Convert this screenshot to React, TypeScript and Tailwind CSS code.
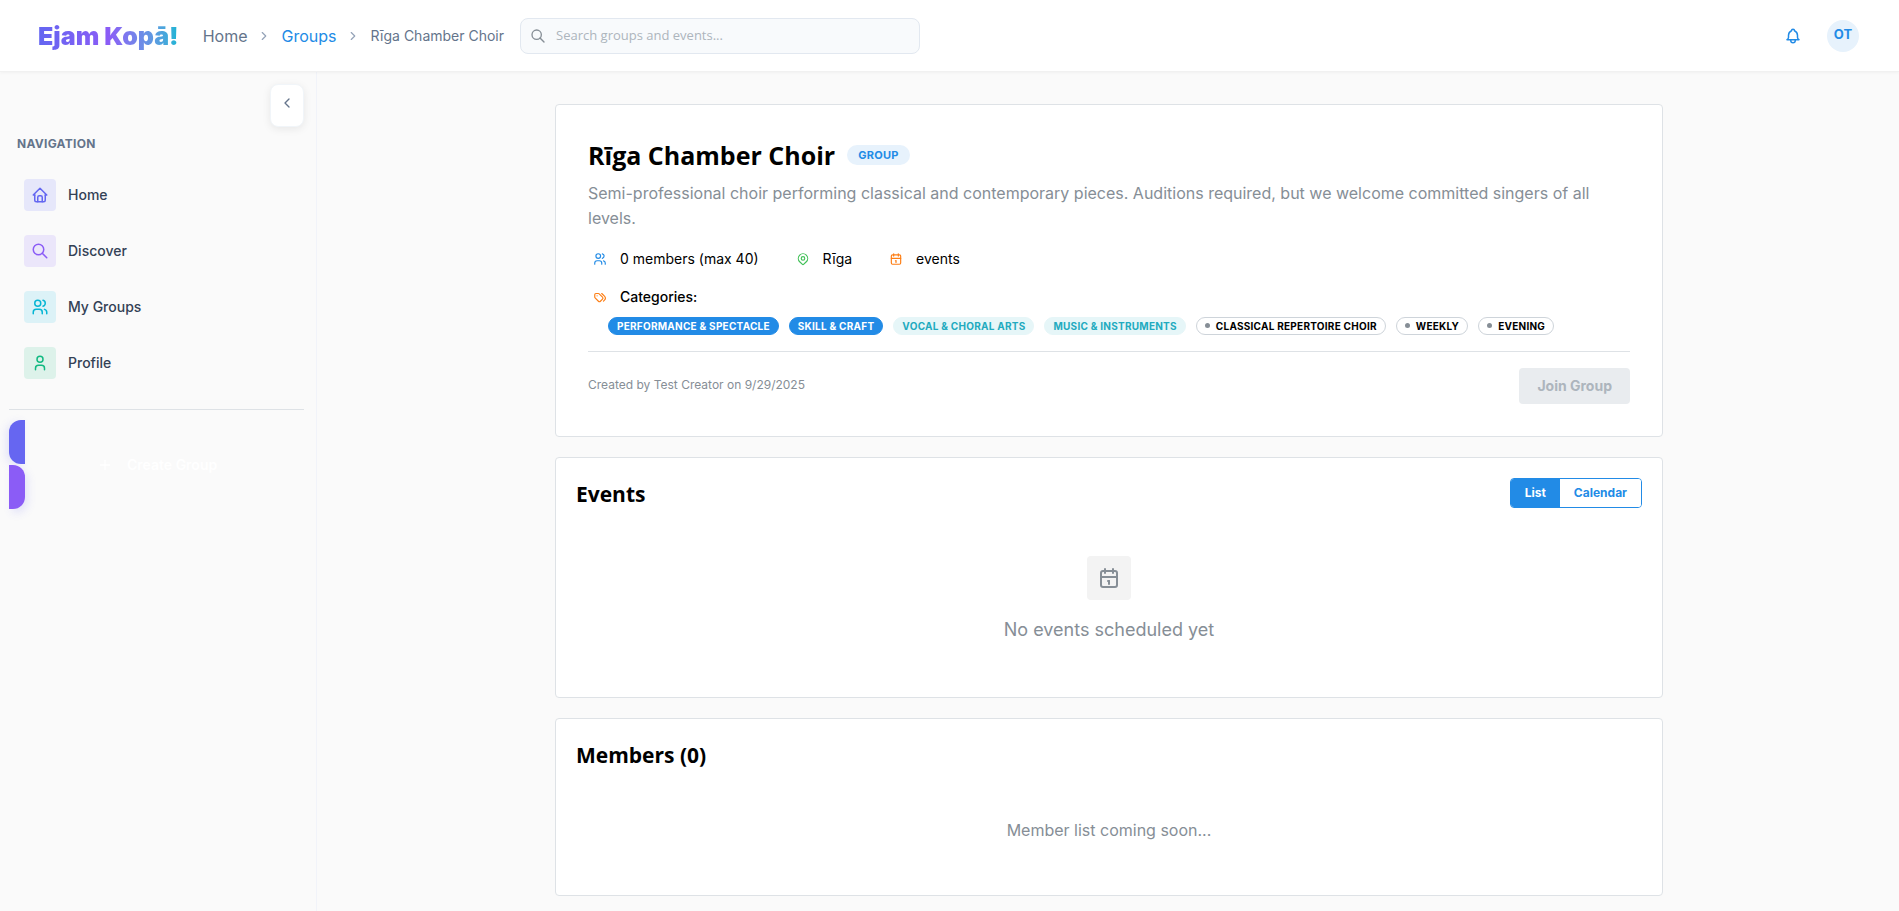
import React from "react";
import type { ReactNode } from "react";
import {
  TbBell,
  TbCalendar,
  TbChevronLeft,
  TbChevronRight,
  TbHome,
  TbMapPin,
  TbPlus,
  TbSearch,
  TbTags,
  TbUser,
  TbUsers,
} from "react-icons/tb";

const navItems = [
  { label: "Home", icon: <TbHome size={18} />, tone: "bg-[#e6e7fa] text-[#6366f1]" },
  { label: "Discover", icon: <TbSearch size={18} />, tone: "bg-[#ebe6fa] text-[#8b5cf6]" },
  { label: "My Groups", icon: <TbUsers size={18} />, tone: "bg-[#dcf2f7] text-[#06b6d4]" },
  { label: "Profile", icon: <TbUser size={18} />, tone: "bg-[#ddf2ea] text-[#10b981]" },
];

const categories = [
  { label: "Performance & Spectacle", kind: "filled" },
  { label: "Skill & Craft", kind: "filled" },
  { label: "Vocal & Choral Arts", kind: "light" },
  { label: "Music & Instruments", kind: "light" },
  { label: "Classical Repertoire Choir", kind: "dot" },
  { label: "Weekly", kind: "dot" },
  { label: "Evening", kind: "dot" },
];

const badgeStyles: Record<string, string> = {
  filled: "border-[#228be6] bg-[#228be6] text-white",
  light: "border-[#e6f6f8] bg-[#e6f6f8] text-[#22aabf]",
  dot: "border-[#ced4da] bg-white text-black",
};

function Header() {
  return (
    <header className="relative z-10 flex h-[72px] shrink-0 items-center border-b border-[#f1f1f1] bg-white pt-px pr-10 pl-[38px] shadow-[0_1px_3px_rgba(0,0,0,0.04)]">
      <a
        href="#"
        className="bg-gradient-to-r from-[#6366f1] via-[#8b5cf6] to-[#06b6d4] bg-clip-text font-[Inter,sans-serif] text-[25px] leading-8 font-black text-transparent"
      >
        Ejam Kopā!
      </a>
      <nav aria-label="Breadcrumb" className="ml-6 flex items-center gap-[10px] text-[#64748b]">
        <a href="#" className="text-base">Home</a>
        <TbChevronRight size={14} className="text-[#94a3b8]" />
        <a href="#" className="text-base text-[#228be6]">Groups</a>
        <TbChevronRight size={14} className="text-[#94a3b8]" />
        <span className="text-sm">Rīga Chamber Choir</span>
      </nav>
      <label className="ml-4 flex h-9 w-[400px] items-center gap-[10px] rounded-lg border border-[#e2e8f0] bg-[#f8fafc] px-[9px] text-[#868e96]">
        <TbSearch size={16} />
        <input
          type="search"
          aria-label="Search groups and events"
          placeholder="Search groups and events..."
          className="min-w-0 flex-1 bg-transparent font-['Open_Sans',sans-serif] text-[13px] text-black outline-none placeholder:text-[#adb5bd]"
        />
      </label>
      <div className="ml-auto flex items-center gap-[25px]">
        <button type="button" aria-label="Notifications" className="text-[#228be6]">
          <TbBell size={18} />
        </button>
        <button
          type="button"
          className="flex size-8 items-center justify-center rounded-full bg-[#e7f2fc] pb-[3px] text-[13px] font-bold text-[#228be6]"
        >
          OT
        </button>
      </div>
    </header>
  );
}

function Sidebar() {
  return (
    <aside className="flex w-[317px] shrink-0 flex-col border-r border-[#f1f3f9] pt-3 pr-3 pl-[9px]">
      <button
        type="button"
        aria-label="Collapse navigation"
        className="flex h-[43px] w-[34px] justify-center self-end rounded-lg border border-[#f1f5f9] bg-white pt-[10px] text-[#64748b] shadow-[0_2px_8px_rgba(0,0,0,0.08)]"
      >
        <TbChevronLeft size={16} />
      </button>
      <h2 className="mt-2 pl-2 text-xs leading-[18px] font-bold tracking-wide text-[#64748b]">NAVIGATION</h2>
      <nav aria-label="Main" className="mt-[26px] flex flex-col gap-6 pl-[15px]">
        {navItems.map((item) => (
          <a key={item.label} href="#" className="flex items-center gap-3 text-sm font-medium text-[#334155]">
            <span className={`flex size-8 items-center justify-center rounded ${item.tone}`}>{item.icon}</span>
            {item.label}
          </a>
        ))}
      </nav>
      <hr className="mt-[30px] border-[#dee2e6]" />
      <button type="button" className="mt-[10px] flex items-stretch">
        <span className="flex w-4 flex-col gap-px">
          <span className="h-11 rounded-l-xl bg-[#6666f1] shadow-[-3px_2px_8px_rgba(99,102,241,0.15)]" />
          <span className="h-11 rounded-r-xl bg-[#8b5cf6] shadow-[3px_4px_8px_rgba(99,102,241,0.15)]" />
        </span>
        <span className="flex items-center gap-[14px] pl-[72px] text-sm font-semibold text-white">
          <TbPlus size={16} />
          Create Group
        </span>
      </button>
    </aside>
  );
}

function Fact({ icon, tone, children }: { icon: ReactNode; tone: string; children: ReactNode }) {
  return (
    <div className="flex h-6 items-center gap-2 text-sm">
      <span className={`flex w-6 justify-center ${tone}`}>{icon}</span>
      {children}
    </div>
  );
}

function Card({ className, children }: { className: string; children: ReactNode }) {
  return <section className={`rounded border border-[#dee2e6] bg-white ${className}`}>{children}</section>;
}

function GroupCard() {
  return (
    <Card className="p-8">
      <div className="flex items-center gap-3">
        <h1 className="font-['Open_Sans',sans-serif] text-[25px] leading-9 font-bold">Rīga Chamber Choir</h1>
        <span className="flex h-5 items-center rounded-full bg-[#e7f2fc] px-[11px] text-[11px] font-bold tracking-wide text-[#228be6]">
          GROUP
        </span>
      </div>
      <p className="mt-2 text-base leading-[25px] text-[#868e96]">
        Semi-professional choir performing classical and contemporary pieces. Auditions required, but we welcome
        committed singers of all levels.
      </p>
      <div className="mt-4 flex gap-8">
        <Fact icon={<TbUsers size={14} />} tone="text-[#228be6]">0 members (max 40)</Fact>
        <Fact icon={<TbMapPin size={14} />} tone="text-[#40c057]">Rīga</Fact>
        <Fact icon={<TbCalendar size={14} />} tone="text-[#fd7e14]">events</Fact>
      </div>
      <div className="mt-[14px] font-medium">
        <Fact icon={<TbTags size={14} />} tone="text-[#fd7e14]">Categories:</Fact>
      </div>
      <ul className="mt-2 flex flex-wrap gap-[10px] pl-5">
        {categories.map((c) => (
          <li
            key={c.label}
            className={`flex h-[18px] items-center gap-[6px] rounded-full border px-2 text-[10px] font-bold tracking-wide uppercase ${badgeStyles[c.kind]}`}
          >
            {c.kind === "dot" && <span className="mb-px size-[5px] rounded-full bg-[#868e96]" />}
            {c.label}
          </li>
        ))}
      </ul>
      <div className="mt-4 flex items-center justify-between border-t border-[#dee2e6] pt-4">
        <p className="pb-[3px] text-xs text-[#868e96]">Created by Test Creator on 9/29/2025</p>
        <button type="button" disabled className="h-9 rounded bg-[#e9ecef] px-[18px] text-sm font-bold text-[#adb5bd]">
          Join Group
        </button>
      </div>
    </Card>
  );
}

export default function App() {
  return (
    <div className="flex min-h-screen flex-col bg-[#fafafa] font-[Inter,sans-serif] text-black">
      <Header />
      <div className="flex flex-1">
        <Sidebar />
        <main className="flex-1 pt-8 pb-[13px] pl-0.5">
          <div className="mx-auto flex max-w-[1140px] flex-col gap-5 px-4">
            <GroupCard />
            <Card className="p-5">
              <div className="flex items-start justify-between">
                <h2 className="font-['Open_Sans',sans-serif] text-[21px] leading-8 font-bold">Events</h2>
                <div className="flex h-[30px] overflow-hidden rounded border border-[#228be6] text-xs font-bold">
                  <button type="button" className="bg-[#228be6] px-[14px] text-white">List</button>
                  <button type="button" className="bg-white px-[14px] text-[#228be6]">Calendar</button>
                </div>
              </div>
              <div className="flex flex-col items-center pt-[46px] pb-[33px]">
                <span className="flex size-11 items-center justify-center rounded bg-[#f3f3f3] text-[#868e96]">
                  <TbCalendar size={24} />
                </span>
                <p className="mt-4 text-lg text-[#868e96]">No events scheduled yet</p>
              </div>
            </Card>
            <Card className="p-5">
              <h2 className="font-['Open_Sans',sans-serif] text-[21px] leading-8 font-bold">Members (0)</h2>
              <p className="pt-[46px] pb-8 text-center text-base leading-[26px] text-[#868e96]">
                Member list coming soon...
              </p>
            </Card>
          </div>
        </main>
      </div>
    </div>
  );
}
